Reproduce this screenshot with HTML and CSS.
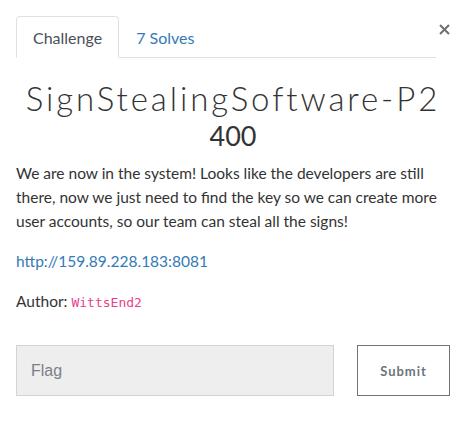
FILE: index.html
```html
<!DOCTYPE html>
<html>
<head>
<meta charset="utf-8">
<link rel="stylesheet" href="styles.css">
</head>
<body>
<div class="modal">
  <div class="head">
    <ul class="tabs">
      <li class="tab active">Challenge</li>
      <li class="tab link">7 Solves</li>
    </ul>
    <button class="close" aria-label="Close">
      <svg width="11" height="11" viewBox="0 0 11 11"><path d="M1 1L10 10M10 1L1 10" stroke="#6f6f6f" stroke-width="2" fill="none"/></svg>
    </button>
  </div>
  <div class="body">
    <h2 class="title">SignStealingSoftware-P2</h2>
    <h3 class="value">400</h3>
    <p class="desc">We are now in the system! Looks like the developers are still there, now we just need to find the key so we can create more user accounts, so our team can steal all the signs!</p>
    <p class="desc"><a class="url" href="#">http://159.89.228.183:8081</a></p>
    <p class="desc">Author: <code class="author">WittsEnd2</code></p>
    <form class="submit-row">
      <input class="flag" type="text" placeholder="Flag">
      <button class="submit" type="button">Submit</button>
    </form>
  </div>
</div>
</body>
</html>
```

FILE: styles.css
```css
html, body {
  margin: 0;
  padding: 0;
  background: #fff;
}
body {
  font-family: Lato, "Open Sans", sans-serif;
  color: #333;
}
.modal {
  padding: 16px 14px 0 16px;
}
.head {
  display: flex;
  align-items: flex-start;
}
.tabs {
  width: 420px;
  flex: none;
  display: flex;
  margin: 0;
  padding: 0;
  list-style: none;
  border-bottom: 1px solid #dee2e6;
}
.tab {
  height: 40px;
  display: flex;
  align-items: center;
  padding: 0 16px;
  font-size: 16px;
  border: 1px solid transparent;
  margin-bottom: -1px;
  border-radius: 4px 4px 0 0;
}
.tab.active {
  color: #495057;
  border-color: #dee2e6 #dee2e6 #fff;
  background: #fff;
}
.tab.link {
  color: #337ab7;
}
.close {
  margin: 8px 0 0 auto;
  padding: 0;
  border: 0;
  background: none;
  width: 11px;
  height: 11px;
  display: flex;
}
.title {
  margin: 20px 0 0;
  text-align: center;
  font-family: Lato, sans-serif;
  font-weight: 300;
  font-size: 33px;
  letter-spacing: 2.9px;
  line-height: 40px;
  color: #333;
}
.value {
  margin: 1px 0 0;
  text-align: center;
  font-weight: 400;
  font-size: 27px;
  line-height: 34px;
  color: #333;
}
.desc {
  margin: 8px 0 16px;
  font-size: 15.5px;
  line-height: 24px;
  color: #333;
}
.desc + .desc {
  margin-top: 0;
}
.url {
  color: #337ab7;
  text-decoration: none;
}
.author {
  font-family: "DejaVu Sans Mono", monospace;
  font-size: 13px;
  color: #e83e8c;
}
.submit-row {
  display: flex;
  gap: 23px;
  margin-top: 30px;
  width: 434px;
}
.flag {
  box-sizing: border-box;
  width: 318px;
  height: 51px;
  border: 1px solid #ced4da;
  background: #eee;
  padding: 0 14px;
  font-family: "Liberation Sans", Arial, sans-serif;
  font-size: 16px;
  color: #495057;
  outline: none;
}
.flag::placeholder {
  color: #7b8087;
}
.submit {
  box-sizing: border-box;
  width: 93px;
  height: 51px;
  background: #fff;
  border: 1px solid #6c757d;
  font-family: Lato, sans-serif;
  font-weight: 700;
  font-size: 13px;
  letter-spacing: 1px;
  color: #6c757d;
  padding: 0;
}
```
